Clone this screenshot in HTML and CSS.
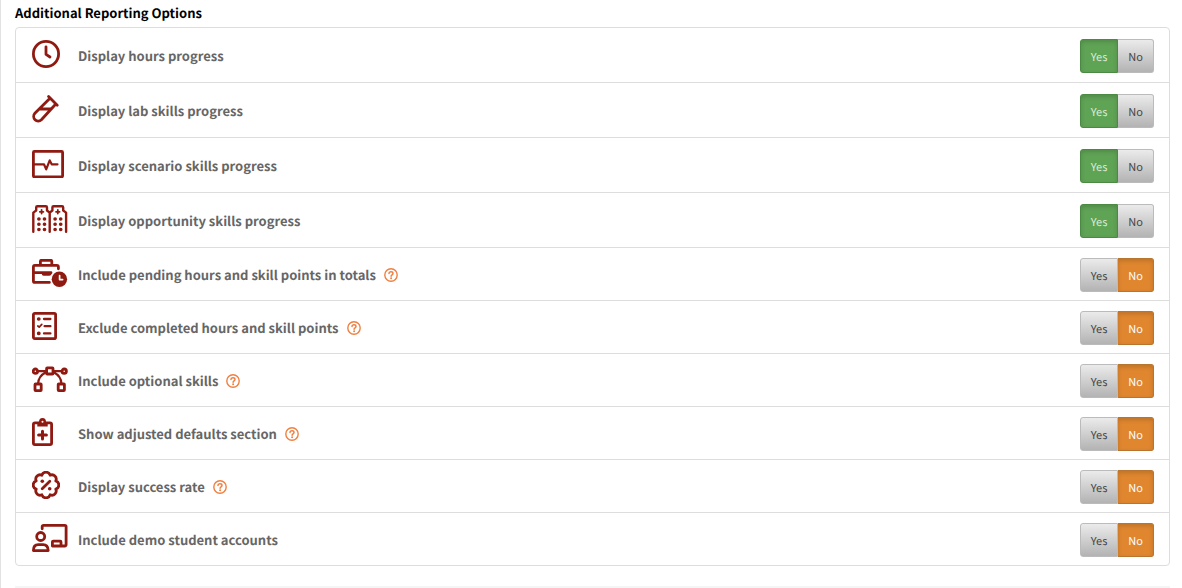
FILE: index.html
```html
<!DOCTYPE html>
<html lang="en">
<head>
  <meta charset="UTF-8" />
  <meta name="viewport" content="width=device-width, initial-scale=1.0"/>
  <title>Additional Reporting Options</title>
  <link rel="stylesheet" href="styles.css">
</head>
<body>

  <svg class="sprite" aria-hidden="true">
    <symbol id="help" viewBox="0 0 14 14">
      <circle cx="7" cy="7" r="6.2" fill="none" stroke="currentColor" stroke-width="1.4"/>
      <path d="M5 5.6C5 4.4 5.8 3.8 7 3.8s2 .7 2 1.7C9 6.8 7.1 6.8 7.1 8.2" fill="none" stroke="currentColor" stroke-width="1.5" stroke-linecap="round"/>
      <circle cx="7.1" cy="10.3" r="1" fill="currentColor"/>
    </symbol>
  </svg>

  <main class="page">
    <h2 class="title">Additional Reporting Options</h2>

    <div class="options">
      <div class="row tall">
        <span class="icon">
          <svg width="28" height="28" viewBox="0 0 28 28"><circle cx="14" cy="14" r="12.6"/><path d="M14 6.8V14.3L18 17"/></svg>
        </span>
        <span class="label">Display hours progress</span>
        <div class="toggle" role="group" aria-label="Display hours progress">
          <label class="btn yes"><input type="radio" name="hours" checked>Yes</label>
          <label class="btn no"><input type="radio" name="hours">No</label>
        </div>
      </div>

      <div class="row tall">
        <span class="icon">
          <svg width="28" height="28" viewBox="0 0 28 28"><path d="M16.6 1.6L25.2 10.2M18 3.2L2.9 18.3A4.6 4.6 0 0 0 9.4 24.8L23.8 9M7.6 14H18.5"/></svg>
        </span>
        <span class="label">Display lab skills progress</span>
        <div class="toggle" role="group" aria-label="Display lab skills progress">
          <label class="btn yes"><input type="radio" name="lab" checked>Yes</label>
          <label class="btn no"><input type="radio" name="lab">No</label>
        </div>
      </div>

      <div class="row tall">
        <span class="icon">
          <svg width="32" height="28" viewBox="0 0 32 28"><rect x="1.4" y="1.4" width="29.2" height="25.4" rx="1"/><path d="M2 14.3H12L14.2 19.4L17.7 10.4L19.7 14.3H25.5" stroke-width="2.2"/></svg>
        </span>
        <span class="label">Display scenario skills progress</span>
        <div class="toggle" role="group" aria-label="Display scenario skills progress">
          <label class="btn yes"><input type="radio" name="scenario" checked>Yes</label>
          <label class="btn no"><input type="radio" name="scenario">No</label>
        </div>
      </div>

      <div class="row tall">
        <span class="icon">
          <svg width="36" height="28" viewBox="0 0 36 28">
            <path d="M1.3 26.8V7.6L4.2 5.5V2.5Q4.2 1.3 5.4 1.3H13.8Q15 1.3 15 2.5V5.5L17.7 7.6V26.8M17.7 7.6L20.4 5.5V2.5Q20.4 1.3 21.6 1.3H30Q31.2 1.3 31.2 2.5V5.5L34.1 7.6V26.8" stroke-width="2.4"/>
            <path d="M9.6 5V8.6M7.8 6.8H11.4M25.8 5V8.6M24 6.8H27.6" stroke-width="1.8"/>
            <path d="M6.8 14H7M12.4 14H12.6M6.8 19.3H7M12.4 19.3H12.6M6.8 24.6H7M12.4 24.6H12.6M23 14H23.2M28.6 14H28.8M23 19.3H23.2M28.6 19.3H28.8M23 24.6H23.2M28.6 24.6H28.8" stroke-width="3.5"/>
          </svg>
        </span>
        <span class="label">Display opportunity skills progress</span>
        <div class="toggle" role="group" aria-label="Display opportunity skills progress">
          <label class="btn yes"><input type="radio" name="opportunity" checked>Yes</label>
          <label class="btn no"><input type="radio" name="opportunity">No</label>
        </div>
      </div>

      <div class="row">
        <span class="icon">
          <svg width="36" height="28" viewBox="0 0 36 28">
            <path d="M8.4 6V2.4Q8.4 1.3 9.5 1.3H18.7Q19.8 1.3 19.8 2.4V6M17.4 23.4H2.9Q1.4 23.4 1.4 21.9V8Q1.4 6.4 2.9 6.4H24.7Q26.4 6.4 26.4 8V9.8M1.4 13.7H19"/>
            <path class="solid" d="M9.8 13.5H19.6V15Q19 16.8 17.4 16.8H11.6Q9.8 16.8 9.8 15Z"/>
            <circle class="solid" cx="27.4" cy="20.3" r="7.7"/>
            <path d="M27.6 16.6V20.6H30.6" stroke="#fff" stroke-width="1.7"/>
          </svg>
        </span>
        <span class="label">Include pending hours and skill points in totals</span>
        <button type="button" class="help" aria-label="Help"><svg width="14" height="14"><use href="#help"/></svg></button>
        <div class="toggle" role="group" aria-label="Include pending hours and skill points in totals">
          <label class="btn yes"><input type="radio" name="pending">Yes</label>
          <label class="btn no"><input type="radio" name="pending" checked>No</label>
        </div>
      </div>

      <div class="row">
        <span class="icon">
          <svg width="25" height="28" viewBox="0 0 25 28">
            <rect x="1.4" y="1.4" width="22.2" height="25.2" rx="1.4"/>
            <path d="M12 7H18.4M12.6 14.2H18.4M12 21.4H18.4" stroke-width="2.3"/>
            <path d="M6.6 7H6.9M6.6 21.4H6.9" stroke-width="3.6"/>
            <path d="M5.8 14L7.2 15.2L9.8 12.4" stroke-width="1.7"/>
          </svg>
        </span>
        <span class="label">Exclude completed hours and skill points</span>
        <button type="button" class="help" aria-label="Help"><svg width="14" height="14"><use href="#help"/></svg></button>
        <div class="toggle" role="group" aria-label="Exclude completed hours and skill points">
          <label class="btn yes"><input type="radio" name="completed">Yes</label>
          <label class="btn no"><input type="radio" name="completed" checked>No</label>
        </div>
      </div>

      <div class="row">
        <span class="icon">
          <svg width="36" height="28" viewBox="0 0 36 28">
            <circle cx="3.4" cy="6.2" r="2.2"/><circle cx="32.2" cy="6.2" r="2.2"/>
            <rect x="14.6" y="2.8" width="6.4" height="6.2" rx=".6"/>
            <rect x="3" y="19" width="6.2" height="6.6" rx=".6"/><rect x="26.2" y="19" width="6.2" height="6.6" rx=".6"/>
            <path d="M5.8 6.2H14M21.6 6.2H29.8M14 7.2Q6.4 11 6.1 18.6M21.6 7.2Q29.2 11 29.4 18.6" stroke-width="2.2"/>
          </svg>
        </span>
        <span class="label">Include optional skills</span>
        <button type="button" class="help" aria-label="Help"><svg width="14" height="14"><use href="#help"/></svg></button>
        <div class="toggle" role="group" aria-label="Include optional skills">
          <label class="btn yes"><input type="radio" name="optional">Yes</label>
          <label class="btn no"><input type="radio" name="optional" checked>No</label>
        </div>
      </div>

      <div class="row">
        <span class="icon">
          <svg width="21" height="28" viewBox="0 0 21 28">
            <rect x="1.4" y="4.9" width="18.2" height="21.7" rx="1.6"/>
            <path d="M10.5 13.2V21M6.6 17.1H14.4" stroke-width="3"/>
            <path class="solid" d="M5.3 4H7A3.5 3.9 0 0 1 14 4H15.7V8.6H5.3Z"/>
            <circle cx="10.5" cy="3.8" r="1" fill="#fff" stroke="none"/>
          </svg>
        </span>
        <span class="label">Show adjusted defaults section</span>
        <button type="button" class="help" aria-label="Help"><svg width="14" height="14"><use href="#help"/></svg></button>
        <div class="toggle" role="group" aria-label="Show adjusted defaults section">
          <label class="btn yes"><input type="radio" name="defaults">Yes</label>
          <label class="btn no"><input type="radio" name="defaults" checked>No</label>
        </div>
      </div>

      <div class="row">
        <span class="icon">
          <svg width="28" height="28" viewBox="0 0 28 28">
            <path d="M9.9 4.2A4.3 4.3 0 0 1 18.1 4.2A4.3 4.3 0 0 1 23.8 9.9A4.3 4.3 0 0 1 23.8 18.1A4.3 4.3 0 0 1 18.1 23.8A4.3 4.3 0 0 1 9.9 23.8A4.3 4.3 0 0 1 4.2 18.1A4.3 4.3 0 0 1 4.2 9.9A4.3 4.3 0 0 1 9.9 4.2Z"/>
            <path d="M10.2 17.8L17.8 10.2"/>
            <circle class="solid" cx="10.3" cy="10.3" r="1.8"/><circle class="solid" cx="17.7" cy="17.7" r="1.8"/>
          </svg>
        </span>
        <span class="label">Display success rate</span>
        <button type="button" class="help" aria-label="Help"><svg width="14" height="14"><use href="#help"/></svg></button>
        <div class="toggle" role="group" aria-label="Display success rate">
          <label class="btn yes"><input type="radio" name="success">Yes</label>
          <label class="btn no"><input type="radio" name="success" checked>No</label>
        </div>
      </div>

      <div class="row">
        <span class="icon">
          <svg width="36" height="28" viewBox="0 0 36 28">
            <path d="M10.2 4.8V2.6Q10.2 1.4 11.5 1.4H32.8Q34.1 1.4 34.1 2.7V20.6Q34.1 22 32.8 22H20.4V18Q20.4 17.2 21.2 17.2H28.2Q29 17.2 29 18V21.5"/>
            <circle cx="8.7" cy="12.5" r="4"/>
            <path d="M6.3 20.7H11.1Q16 20.7 16.2 26.6H1.4Q1.4 20.7 6.3 20.7Z"/>
          </svg>
        </span>
        <span class="label">Include demo student accounts</span>
        <div class="toggle" role="group" aria-label="Include demo student accounts">
          <label class="btn yes"><input type="radio" name="demo">Yes</label>
          <label class="btn no"><input type="radio" name="demo" checked>No</label>
        </div>
      </div>
    </div>

    <div class="next-section"></div>
  </main>

</body>
</html>
```
FILE: styles.css
```css
* {
  box-sizing: border-box;
}
body {
  margin: 0;
  background: #fff;
  font-family: "Noto Sans CJK SC", "Noto Sans", sans-serif;
  font-size: 13px;
  color: #666;
  text-rendering: geometricPrecision;
}
.sprite {
  display: none;
}
.page {
  min-height: 100vh;
  padding: 3px 12px 0 14px;
  border-left: 1px solid #e2e2e2;
}
.title {
  margin: 0 0 4px;
  font-size: 13px;
  line-height: 20px;
  font-weight: bold;
  color: #000;
}
.options {
  border: 1px solid #ddd;
  border-radius: 4px;
}
.row {
  display: flex;
  align-items: center;
  height: 53px;
  padding: 1px 15px 0 16px;
  border-bottom: 1px solid #ddd;
}
.row.tall {
  height: 55px;
  padding-top: 2px;
}
.row:last-child {
  height: 52px;
  border-bottom: none;
}
.icon {
  display: flex;
  width: 46px;
  margin-bottom: 4px;
}
.icon svg {
  fill: none;
  stroke: #8f1a12;
  stroke-width: 2.8;
  stroke-linecap: round;
  stroke-linejoin: round;
}
.icon .solid {
  fill: #8f1a12;
  stroke: none;
}
.label {
  font-weight: bold;
  line-height: 20px;
}
.help {
  display: flex;
  margin-left: 8px;
  padding: 0;
  border: none;
  background: none;
  color: #f08040;
  cursor: pointer;
}
.toggle {
  display: flex;
  margin-left: auto;
}
.btn {
  position: relative;
  height: 34px;
  padding-top: 1px;
  border: 1px solid #bbb;
  background: linear-gradient(#ebebeb, #b3b3b3);
  color: #444;
  font-size: 11px;
  line-height: 32px;
  text-align: center;
  cursor: pointer;
}
.btn input {
  position: absolute;
  opacity: 0;
  margin: 0;
}
.yes {
  width: 38px;
  border-radius: 3px 0 0 3px;
}
.no {
  width: 36px;
  border-left: none;
  border-radius: 0 3px 3px 0;
}
.yes:has(input:checked) {
  border-color: #4a8a42;
  background: #5fa355;
  box-shadow: inset 0 2px 4px rgba(0, 0, 0, 0.15);
  color: #dcecd9;
}
.no:has(input:checked) {
  border-color: #b8752f;
  background: #df862f;
  box-shadow: inset 0 2px 4px rgba(0, 0, 0, 0.15);
  color: #fff;
}
.next-section {
  height: 2px;
  margin-top: 20px;
  background: #f5f5f5;
}
```
